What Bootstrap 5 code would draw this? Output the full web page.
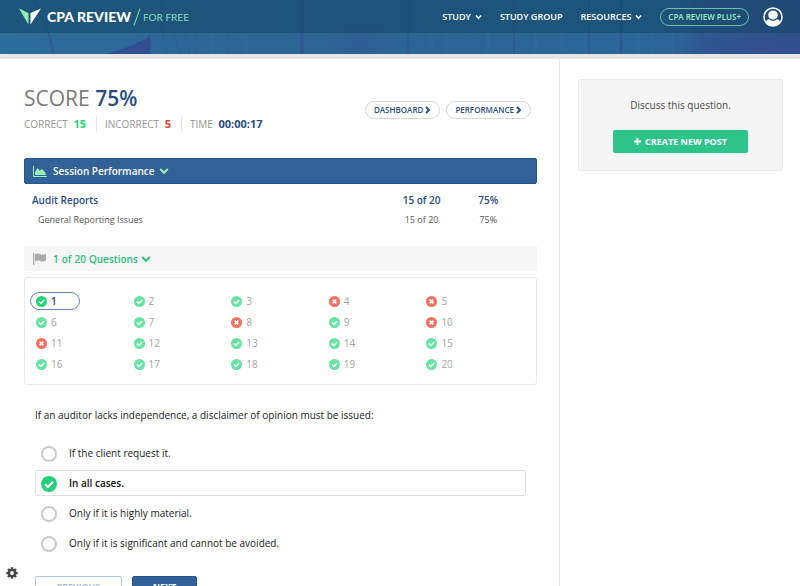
<!DOCTYPE html>
<html lang="en">
<head>
<meta charset="utf-8">
<meta name="viewport" content="width=device-width, initial-scale=1">
<title>CPA Review for Free</title>
<link href="https://cdn.jsdelivr.net/npm/bootstrap@5.3.0/dist/css/bootstrap.min.css" rel="stylesheet">
<style>
  body { font-family: "Open Sans", "Noto Sans", sans-serif; font-size: 11px; line-height: 16px; color: #444; background: #fff; }
  a { text-decoration: none; }
  svg { display: block; flex: none; }
  svg:not([fill]) { fill: currentColor; }
  .masthead { position: relative; background: #2c6797; border-bottom: 5px solid #e6e6e6; padding-bottom: 21px; overflow: hidden; }
  .masthead .wood { position: absolute; inset: 0; width: 100%; height: 100%; }
  .topnav { position: relative; height: 33px; background: rgba(20, 72, 104, .6); padding: 0 17px 0 19px; }
  .brand-name { font: 900 14px/16px Lato, sans-serif; color: #fff; margin: 0 2px 0 6px; }
  .brand-tag { font: 400 10px/16px Lato, sans-serif; color: #86dcb9; margin-left: 2px; }
  .topnav .menu-link { color: #fff; font-size: 9px; font-weight: 600; margin-right: 18px; }
  .topnav .plus-link { color: #9cecbc; border: 1px solid #6fc0a4; border-radius: 10px; font-size: 8px; font-weight: 600; height: 18px; padding: 0 7px; margin-right: 14px; }
  .main-pane { width: 70%; border-right: 1px solid #e9e9e9; padding: 26px 22px 40px 24px; }
  .side-pane { width: 30%; padding: 20px 17px 20px 18px; }
  .score { font-size: 21px; line-height: 26px; font-weight: 400; color: #7a7a7a; }
  .score strong { font-weight: 600; color: #2a4c84; }
  .tally { font-size: 10px; color: #949494; margin-top: 5px; }
  .tally strong { font-size: 11px; font-weight: 700; margin-left: 3px; }
  .tally div + div { border-left: 1px solid #e6e6e6; padding-left: 8px; margin-left: 10px; }
  .c-navy { color: #2a4c84; } .c-green { color: #26cf78; } .c-red { color: #ee3a2b; }
  .pill-group { gap: 6px; margin-right: 6px; }
  .pill-link { border: 1px solid #d8d8d8; border-radius: 10px; height: 18px; padding: 0 8px; gap: 2px; font-size: 8px; font-weight: 600; color: #30507c; }
  .bar { width: 100%; height: 26px; border: 0; text-align: left; font-size: 10px; font-weight: 600; padding: 0 9px; }
  .bar-blue { background: #316197; color: #fff; border: 1px solid #24568f; border-radius: 2px; margin-top: 26px; padding: 0 8px; }
  .bar-blue .label { margin: 0 4px 0 6px; }
  .bar-gray { background: #f6f6f6; color: #2dbd7c; height: 25px; margin-top: 17px; gap: 3px; }
  .results { width: 100%; margin-top: 7px; table-layout: fixed; }
  .results th, .results td { height: 19px; padding: 0; line-height: 19px; text-align: center; }
  .results th:first-child { width: 71%; text-align: left; }
  .results .topic th, .results .topic td { color: #2a4c84; font-size: 10px; font-weight: 600; }
  .results .topic th { padding-left: 8px; }
  .results .subtopic th, .results .subtopic td { color: #555; font-size: 9px; font-weight: 400; }
  .results .subtopic th { padding-left: 14px; }
  .question-box { border: 1px solid #ebebeb; border-radius: 3px; margin-top: 6px; padding: 14px 18px 11px 5px; }
  .question-grid { display: grid; grid-template-columns: repeat(5, 1fr); row-gap: 3px; }
  .q-link { width: 50px; height: 18px; border: 1px solid transparent; border-radius: 9px; padding-left: 5px; color: #a3a3a3; font-size: 10px; }
  .q-link svg { color: #67e3a2; margin-right: 4px; }
  .q-link.missed svg { color: #f4705f; }
  .q-link.current { border-color: #6387bb; color: #2a4c84; font-weight: 600; }
  .q-link.current svg { color: #20d273; }
  .quiz { margin: 21px 11px 0; color: #222; }
  .quiz legend { font-size: 10px; line-height: 18px; margin: 0 0 16px; color: #222; float: none; }
  .answer { height: 26px; border: 1px solid transparent; border-radius: 2px; padding: 0 5px; margin-bottom: 4px; font-size: 10px; }
  .answer input { appearance: none; flex: none; width: 16px; height: 16px; border: 2px solid #cbcbcb; border-radius: 50%; margin: 1px 12px 0 0; background: #fff; }
  .answer.chosen { border-color: #e0e0e0; font-weight: 600; color: #111; }
  .answer input:checked { border: 0; background: #25d07a url("data:image/svg+xml,%3Csvg xmlns='http://www.w3.org/2000/svg' viewBox='0 0 16 16'%3E%3Cpath d='M4 8.2l2.8 2.8L12 5.8' fill='none' stroke='%23fff' stroke-width='2.2'/%3E%3C/svg%3E"); }
  .steps { gap: 10px; }
  .step { border-radius: 2px; font-size: 9px; line-height: 12px; font-weight: 600; padding: 4px 0; border: 1px solid #b3c9e0; background: #fff; color: #9db7d4; width: 87px; }
  .step-next { width: 65px; background: #316197; color: #fff; border-color: #24568f; font-weight: 700; }
  .discuss { background: #f5f5f5; border: 1px solid #ebebeb; border-radius: 2px; padding: 17px 10px; text-align: center; }
  .discuss p { font-size: 10px; margin: 0 0 17px; color: #4a4a4a; }
  .post-btn { background: #2dc48c; color: #fff; border: 0; border-radius: 2px; height: 23px; width: 135px; font-size: 9px; font-weight: 700; }
  .settings { position: fixed; left: 6px; bottom: 7px; padding: 0; border: 0; background: none; color: #444; }
</style>
<script src="https://cdn.jsdelivr.net/npm/bootstrap@5.3.0/dist/js/bootstrap.bundle.min.js"></script>
</head>
<body>
<svg class="d-none" aria-hidden="true">
  <symbol id="down" viewBox="0 0 10 8"><path d="M1.2 2l3.8 3.8L8.8 2" fill="none" stroke="currentColor" stroke-width="2"/></symbol>
  <symbol id="right" viewBox="0 0 6 8"><path d="M1 1l3 3-3 3" fill="none" stroke="currentColor" stroke-width="2"/></symbol>
  <symbol id="ok" viewBox="0 0 12 12"><circle cx="6" cy="6" r="6"/><path d="M3.1 6.1l2.1 2.1 3.8-3.8" fill="none" stroke="#fff" stroke-width="1.6"/></symbol>
  <symbol id="no" viewBox="0 0 12 12"><circle cx="6" cy="6" r="6"/><path d="M4 4l4 4M8 4l-4 4" fill="none" stroke="#fff" stroke-width="1.8"/></symbol>
</svg>

<header class="masthead">
  <svg class="wood" viewBox="0 0 800 54" preserveAspectRatio="none" aria-hidden="true">
    <defs>
      <linearGradient id="shade"><stop offset="0" stop-color="#2d6d9b"/><stop offset=".45" stop-color="#2c6494"/><stop offset=".8" stop-color="#2b6899"/><stop offset="1" stop-color="#31528c"/></linearGradient>
      <linearGradient id="edge"><stop offset="0" stop-color="#34498a" stop-opacity="0"/><stop offset=".2" stop-color="#34498a" stop-opacity=".9"/><stop offset="1" stop-color="#34498a" stop-opacity=".9"/></linearGradient>
      <radialGradient id="stain"><stop offset="0" stop-color="#344a90" stop-opacity=".3"/><stop offset="1" stop-color="#344a90" stop-opacity="0"/></radialGradient>
    </defs>
    <rect width="800" height="54" fill="url(#shade)"/>
    <path d="M106 54Q128 48 143 40Q150 37 150 33V54z" fill="#304f91"/>
    <path d="M34 0Q38 13 45 24Q50 33 53 54" fill="none" stroke="#344a90" stroke-width="2" opacity=".5"/>
    <path d="M151 34V54M161 0Q160 30 167 54M172 22Q174 40 180 54M185 30Q187 44 190 54M196 0V54M228 0V54" fill="none" stroke="#2c528e" opacity=".45"/>
    <path d="M302 0V54M621 0V54" stroke="#344a90" stroke-width="3" opacity=".5"/>
    <path d="M408 0V54M514 0V54M589 0V54" stroke="#344a90" stroke-width="1.5" opacity=".5"/>
    <path d="M212 30V54M246 35V54M432 30V54M446 34V54M488 30V54M536 30V54M562 30V54M638 30V54M652 30V54M673 30V54" stroke="#3775a4" opacity=".5"/>
    <ellipse cx="360" cy="38" rx="40" ry="24" fill="url(#stain)"/>
    <rect x="680" width="120" height="54" fill="url(#edge)" opacity=".5"/>
  </svg>
  <nav class="topnav d-flex align-items-center" aria-label="Main">
    <a href="#" class="d-flex align-items-center me-auto">
      <svg width="22" height="17" viewBox="0 0 22 17"><path d="M0 .5l9.500 4.500v11.500z" fill="#94ecaf"/><path d="M22 .5l-10.500 4.500v11.500z" fill="#fff"/></svg>
      <span class="brand-name">CPA REVIEW</span>
      <svg width="8" height="18" viewBox="0 0 8 18"><path d="M7 .5l-6 17" stroke="#8bdfbd"/></svg>
      <span class="brand-tag">FOR FREE</span>
    </a>
    <a href="#" class="menu-link d-flex align-items-center">STUDY<svg class="ms-1" width="7" height="6"><use href="#down"/></svg></a>
    <a href="#" class="menu-link">STUDY GROUP</a>
    <a href="#" class="menu-link d-flex align-items-center">RESOURCES<svg class="ms-1" width="7" height="6"><use href="#down"/></svg></a>
    <a href="#" class="plus-link d-flex align-items-center">CPA REVIEW PLUS+</a>
    <a href="#" class="text-white" aria-label="Account">
      <svg width="20" height="20" viewBox="0 0 20 20"><circle cx="10" cy="10" r="9.800"/><path d="M3 14.300A8.200 8.200 0 1 1 17 14.300Q15.700 12.300 13.300 11.700A4.800 4.800 0 1 0 6.700 11.700Q4.300 12.300 3 14.300z" fill="#214b7a"/><path d="M6.200 11.400Q10 14.800 13.800 11.400" fill="none" stroke="#214b7a" stroke-width="1.300"/></svg>
    </a>
  </nav>
</header>

<div class="d-flex align-items-stretch">
  <main class="main-pane">
    <div class="d-flex justify-content-between align-items-start">
      <div>
        <h1 class="score m-0">SCORE <strong>75%</strong></h1>
        <div class="tally d-flex">
          <div>CORRECT <strong class="c-green">15</strong></div>
          <div>INCORRECT <strong class="c-red">5</strong></div>
          <div>TIME <strong class="c-navy">00:00:17</strong></div>
        </div>
      </div>
      <div class="pill-group d-flex mt-3">
        <a href="#" class="pill-link d-flex align-items-center">DASHBOARD<svg width="6" height="8"><use href="#right"/></svg></a>
        <a href="#" class="pill-link d-flex align-items-center">PERFORMANCE<svg width="6" height="8"><use href="#right"/></svg></a>
      </div>
    </div>

    <button type="button" class="bar bar-blue d-flex align-items-center">
      <svg width="14" height="11" viewBox="0 0 14 11" fill="#9bf0b4"><path d="M0 0h1v10h13v1H0zM2 9V6l2.500-4 2.300 2.400L9 3l3 3 1 3z"/></svg>
      <span class="label">Session Performance</span>
      <svg width="10" height="8" color="#9bf0b4"><use href="#down"/></svg>
    </button>
    <table class="results">
      <tbody>
        <tr class="topic"><th scope="row">Audit Reports</th><td>15 of 20</td><td>75%</td><td style="width:3%"></td></tr>
        <tr class="subtopic"><th scope="row">General Reporting Issues</th><td>15 of 20</td><td>75%</td><td></td></tr>
      </tbody>
    </table>

    <button type="button" class="bar bar-gray d-flex align-items-center">
      <svg class="me-1" width="13" height="12" viewBox="0 0 13 12" fill="#aaa"><path d="M0 0h1.300v12H0zM2 1.500c2-1.300 3.500-1 5-.3 2 .9 3.500.5 6-.7v7c-2 1.200-4 1.500-6 .5-1.800-.8-3.200-.5-5 .5z"/></svg>
      <span>1</span><span>of</span><span>20</span><span>Questions</span>
      <svg width="10" height="8"><use href="#down"/></svg>
    </button>
    <div class="question-box">
      <div class="question-grid" id="questions"></div>
    </div>

    <form class="quiz">
      <fieldset>
        <legend>If an auditor lacks independence, a disclaimer of opinion must be issued:</legend>
        <label class="answer d-flex align-items-center"><input type="radio" name="answer">If the client request it.</label>
        <label class="answer chosen d-flex align-items-center"><input type="radio" name="answer" checked>In all cases.</label>
        <label class="answer d-flex align-items-center"><input type="radio" name="answer">Only if it is highly material.</label>
        <label class="answer d-flex align-items-center"><input type="radio" name="answer">Only if it is significant and cannot be avoided.</label>
      </fieldset>
      <div class="steps d-flex mt-3">
        <button type="button" class="step">PREVIOUS</button>
        <button type="button" class="step step-next">NEXT</button>
      </div>
    </form>
  </main>

  <aside class="side-pane">
    <div class="discuss">
      <p>Discuss this question.</p>
      <button type="button" class="post-btn d-inline-flex align-items-center justify-content-center"><svg class="me-1" width="7" height="7" viewBox="0 0 7 7"><path d="M2.500 0h2v2.500H7v2H4.500V7h-2V4.500H0v-2h2.500z"/></svg>CREATE NEW POST</button>
    </div>
  </aside>
</div>

<button type="button" class="settings" aria-label="Settings">
  <svg width="12" height="12" viewBox="0 0 12 12"><path fill="none" stroke="currentColor" stroke-width="2.400" d="M6 .3v11.400M.3 6h11.400M2 2l8 8M10 2l-8 8"/><circle cx="6" cy="6" r="4.200"/><circle cx="6" cy="6" r="1.900" fill="#fff"/></svg>
</button>

<script>
  const missed = [4, 5, 8, 10, 11];
  let cells = "";
  for (let n = 1; n <= 20; n++) {
    const wrong = missed.includes(n);
    const state = (wrong ? " missed" : "") + (n === 1 ? " current" : "");
    cells += `<a href="#" class="q-link d-flex align-items-center${state}"><svg width="11" height="11"><use href="#${wrong ? "no" : "ok"}"/></svg>${n}</a>`;
  }
  document.getElementById("questions").innerHTML = cells;
</script>
</body>
</html>
